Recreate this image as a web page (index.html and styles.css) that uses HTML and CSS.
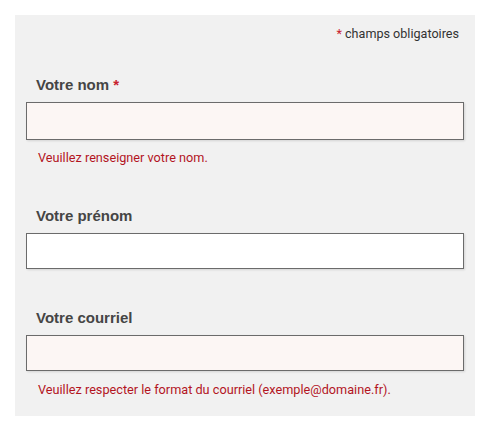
FILE: index.html
```html
<!DOCTYPE html>
<html lang="fr">
<head>
<meta charset="utf-8">
<link rel="stylesheet" href="styles.css">
</head>
<body>
<form class="panel">
  <p class="note"><span class="req">*</span> champs obligatoires</p>
  <div class="field field-error field-first">
    <label class="label" for="nom">Votre nom <span class="req">*</span></label>
    <input class="input input-invalid input-tall" id="nom" type="text">
    <p class="error">Veuillez renseigner votre nom.</p>
  </div>
  <div class="field">
    <label class="label" for="prenom">Votre prénom</label>
    <input class="input" id="prenom" type="text">
  </div>
  <div class="field field-last">
    <label class="label" for="mail">Votre courriel</label>
    <input class="input input-invalid" id="mail" type="text">
    <p class="error">Veuillez respecter le format du courriel (exemple@domaine.fr).</p>
  </div>
</form>
</body>
</html>
```

FILE: styles.css
```css
html, body {
  margin: 0;
  background: #ffffff;
}
body {
  font-family: Roboto, "Liberation Sans", Arial, sans-serif;
  color: #333;
}
.panel {
  margin: 15px 0 0 15px;
  width: 460px;
  box-sizing: border-box;
  background: #f1f1f1;
  padding: 0 11px 18px 11px;
}
.note {
  margin: 0;
  padding: 11px 5px 0 0;
  text-align: right;
  font-size: 12.6px;
  line-height: 16px;
  color: #333;
}
.req {
  color: #c8222e;
}
.field {
  display: flex;
  flex-direction: column;
  margin-top: 40px;
}
.field-first {
  margin-top: 33px;
}
.field-last {
  margin-top: 39px;
}
.label {
  padding-left: 10px;
  font-family: "Liberation Sans", Arial, sans-serif;
  font-size: 15px;
  line-height: 20px;
  font-weight: 700;
  color: #454545;
  margin-bottom: 7px;
}
.input {
  display: block;
  width: 100%;
  height: 36px;
  box-sizing: border-box;
  margin: 0;
  border: 1px solid #6b6b6b;
  background: #ffffff;
  box-shadow: 1px 1px 2px rgba(0, 0, 0, 0.12);
  outline: none;
}
.input-tall {
  height: 38px;
}
.input-invalid {
  background: #fcf6f4;
}
.error {
  margin: 10px 0 0 0;
  padding-left: 12px;
  font-size: 12.7px;
  line-height: 16px;
  color: #b3151f;
}
.field-last .error {
  margin-top: 11px;
}
```
